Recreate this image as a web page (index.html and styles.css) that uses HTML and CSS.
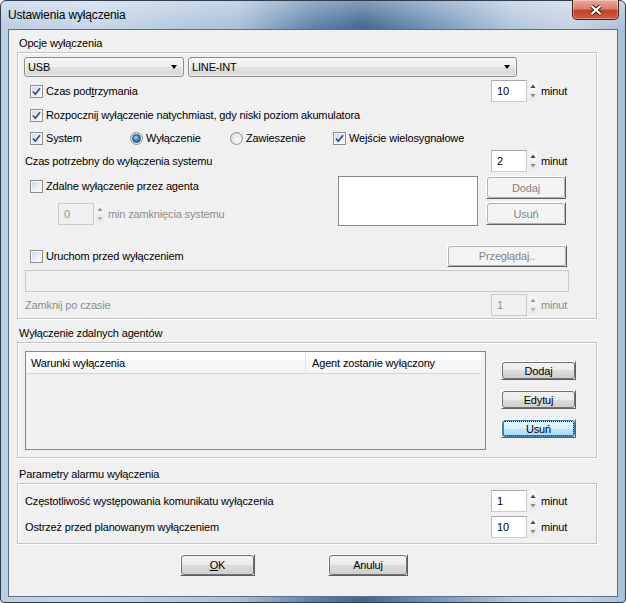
FILE: index.html
```html
<!DOCTYPE html>
<html lang="pl">
<head>
<meta charset="utf-8">
<title>Ustawienia wyłączenia</title>
<link rel="stylesheet" href="styles.css">
</head>
<body>
<div class="window">
  <div class="titlebar">
    <div class="title">Ustawienia wyłączenia</div>
    <div class="close">
      <svg width="16" height="12" viewBox="0 0 16 12"><path d="M3.5 2 L12.5 10 M12.5 2 L3.5 10" stroke="#3a1a14" stroke-width="4.2"/><path d="M3.5 2 L12.5 10 M12.5 2 L3.5 10" stroke="#fff" stroke-width="2.2"/></svg>
    </div>
  </div>
  <div class="client">
    <div class="glabel">Opcje wyłączenia</div>
    <div class="gbox box1">
      <div class="row r1">
        <div class="combo w-usb"><span>USB</span><i class="arrow"></i></div>
        <div class="combo w-line"><span>LINE-INT</span><i class="arrow"></i></div>
      </div>
      <div class="row r2 ind">
        <div class="chk"><span class="cb"><svg width="11" height="11" viewBox="0 0 11 11"><path d="M2 5.5 L4.3 8.2 L9 2.2" fill="none" stroke="#2b4a8c" stroke-width="1.7"/></svg></span><span>Czas pod<u>t</u>rzymania</span></div>
        <div class="spin-group">
          <div class="spin-input">10</div>
          <svg class="updown" width="10" height="22" viewBox="0 0 10 22"><rect x="1" y="1" width="8" height="9.5" fill="#f7f7f7"/><rect x="1" y="11.5" width="8" height="9.5" fill="#ececec"/><path d="M2.5 8 L5 4.5 L7.5 8Z" fill="#444"/><path d="M2.5 14 L5 17.5 L7.5 14Z" fill="#8a8a8a"/></svg>
          <span class="unit">minut</span>
        </div>
      </div>
      <div class="row r3 ind">
        <div class="chk"><span class="cb"><svg width="11" height="11" viewBox="0 0 11 11"><path d="M2 5.5 L4.3 8.2 L9 2.2" fill="none" stroke="#2b4a8c" stroke-width="1.7"/></svg></span><span>Rozpocznij wyłączenie natychmiast, gdy niski poziom akumulatora</span></div>
      </div>
      <div class="row r4 ind">
        <div class="chk c-sys"><span class="cb"><svg width="11" height="11" viewBox="0 0 11 11"><path d="M2 5.5 L4.3 8.2 L9 2.2" fill="none" stroke="#2b4a8c" stroke-width="1.7"/></svg></span><span>System</span></div>
        <div class="chk c-wyl"><span class="rb on"></span><span>Wyłączenie</span></div>
        <div class="chk c-zaw"><span class="rb"></span><span>Zawieszenie</span></div>
        <div class="chk"><span class="cb"><svg width="11" height="11" viewBox="0 0 11 11"><path d="M2 5.5 L4.3 8.2 L9 2.2" fill="none" stroke="#2b4a8c" stroke-width="1.7"/></svg></span><span>Wejście wielosygnałowe</span></div>
      </div>
      <div class="row r5">
        <span class="txt">Czas potrzebny do wyłączenia systemu</span>
        <div class="spin-group">
          <div class="spin-input">2</div>
          <svg class="updown" width="10" height="22" viewBox="0 0 10 22"><rect x="1" y="1" width="8" height="9.5" fill="#f7f7f7"/><rect x="1" y="11.5" width="8" height="9.5" fill="#ececec"/><path d="M2.5 8 L5 4.5 L7.5 8Z" fill="#444"/><path d="M2.5 14 L5 17.5 L7.5 14Z" fill="#8a8a8a"/></svg>
          <span class="unit">minut</span>
        </div>
      </div>
      <div class="r6">
        <div class="r6-left">
          <div class="row r6a ind">
            <div class="chk"><span class="cb"></span><span>Zdalne wyłączenie przez agenta</span></div>
          </div>
          <div class="row r6b">
            <div class="spin-input dis">0</div>
            <svg class="updown" width="10" height="22" viewBox="0 0 10 22"><rect x="1" y="1" width="8" height="9.5" fill="#f5f5f5"/><rect x="1" y="11.5" width="8" height="9.5" fill="#ececec"/><path d="M2.5 8 L5 4.5 L7.5 8Z" fill="#9a9a9a"/><path d="M2.5 14 L5 17.5 L7.5 14Z" fill="#b0b0b0"/></svg>
            <span class="unit gray">min zamknięcia systemu</span>
          </div>
        </div>
        <div class="lb"></div>
        <div class="r6-btns">
          <div class="btn dis h23"><span>Doda<u>j</u></span></div>
          <div class="btn dis h23"><span>Usuń</span></div>
        </div>
      </div>
      <div class="row r7 ind">
        <div class="chk"><span class="cb"></span><span>Uruchom przed wyłączeniem</span></div>
        <div class="btn dis b-przeg"><span>Przeglądaj..</span></div>
      </div>
      <div class="row r8">
        <div class="field"></div>
      </div>
      <div class="row r9">
        <span class="txt gray">Zamknij po czasie</span>
        <div class="spin-group">
          <div class="spin-input dis">1</div>
          <svg class="updown" width="10" height="22" viewBox="0 0 10 22"><rect x="1" y="1" width="8" height="9.5" fill="#f5f5f5"/><rect x="1" y="11.5" width="8" height="9.5" fill="#ececec"/><path d="M2.5 8 L5 4.5 L7.5 8Z" fill="#9a9a9a"/><path d="M2.5 14 L5 17.5 L7.5 14Z" fill="#b0b0b0"/></svg>
          <span class="unit gray">minut</span>
        </div>
      </div>
    </div>

    <div class="glabel g2">Wyłączenie zdalnych agentów</div>
    <div class="gbox box2">
      <div class="lv">
        <div class="lv-head">
          <div class="lv-col c1">Warunki wyłączenia</div>
          <div class="lv-col c2">Agent zostanie wyłączony</div>
        </div>
      </div>
      <div class="box2-btns">
        <div class="btn b-small"><span>Doda<u>j</u></span></div>
        <div class="btn b-small"><span>Edytuj</span></div>
        <div class="btn b-small focus"><span>Usuń</span></div>
      </div>
    </div>

    <div class="glabel g3">Parametry alarmu wyłączenia</div>
    <div class="gbox box3">
      <div class="row r-al">
        <span class="txt">Częstotliwość występowania komunikatu wyłączenia</span>
        <div class="spin-group">
          <div class="spin-input">1</div>
          <svg class="updown" width="10" height="22" viewBox="0 0 10 22"><rect x="1" y="1" width="8" height="9.5" fill="#f7f7f7"/><rect x="1" y="11.5" width="8" height="9.5" fill="#ececec"/><path d="M2.5 8 L5 4.5 L7.5 8Z" fill="#444"/><path d="M2.5 14 L5 17.5 L7.5 14Z" fill="#8a8a8a"/></svg>
          <span class="unit">minut</span>
        </div>
      </div>
      <div class="row r-al r-al2">
        <span class="txt">Ostrzeż przed planowanym wyłączeniem</span>
        <div class="spin-group">
          <div class="spin-input">10</div>
          <svg class="updown" width="10" height="22" viewBox="0 0 10 22"><rect x="1" y="1" width="8" height="9.5" fill="#f7f7f7"/><rect x="1" y="11.5" width="8" height="9.5" fill="#ececec"/><path d="M2.5 8 L5 4.5 L7.5 8Z" fill="#444"/><path d="M2.5 14 L5 17.5 L7.5 14Z" fill="#8a8a8a"/></svg>
          <span class="unit">minut</span>
        </div>
      </div>
    </div>

    <div class="footer">
      <div class="btn b-ok"><span><u>O</u>K</span></div>
      <div class="btn b-cancel"><span>Anuluj</span></div>
    </div>
  </div>
</div>
</body>
</html>
```

FILE: styles.css
```css
* { box-sizing: border-box; }
html, body { margin: 0; padding: 0; }
body {
  width: 626px; height: 603px; overflow: hidden; background: #fff;
  font-family: "Liberation Sans", Arial, sans-serif; font-size: 11px; color: #000;
  letter-spacing: -0.15px;
}
.window {
  width: 626px; height: 603px;
  border: 1px solid #2e3d50;
  border-radius: 6px 6px 4px 4px;
  display: flex; flex-direction: column;
  background:
    linear-gradient(to bottom, rgba(255,255,255,0.35), rgba(255,255,255,0) 28px),
    linear-gradient(to right, #bccee2 0%, #c6d6e8 15%, #a9bfd8 38%, #5d81aa 50%, #40678f 58%, #6d90b6 68%, #b2c6db 82%, #c4d4e6 92%, #a9bfd7 100%);
}
.titlebar {
  height: 28px; flex: none;
  display: flex; align-items: flex-start; justify-content: space-between;
  padding-left: 7px;
}
.title { font-size: 12px; line-height: 14px; margin-top: 7px; color: #000; }
.close {
  width: 47px; height: 20px; margin-top: -1px; margin-right: 6px;
  border: 1px solid #4a1c14; border-top: none;
  border-radius: 0 0 5px 5px;
  background: linear-gradient(#e9a99a 0%, #d9816f 45%, #c5432c 55%, #cf5a3b 100%);
  box-shadow: inset 0 0 0 1px rgba(255,255,255,0.35);
  display: flex; align-items: center; justify-content: center;
}
.client {
  flex: 1; margin: 0 7px 5px 7px;
  border: 1px solid #5e6f84;
  background: #f0f0f0;
}
.glabel { height: 17px; line-height: 17px; padding-left: 10px; margin-top: 5px; }
.g2 { margin-top: 6px; }
.g3 { margin-top: 8px; }
.gbox {
  margin-left: 8px; width: 580px;
  border: 1px solid #c3c3c3;
  box-shadow: inset 1px 1px 0 #fff, 1px 1px 0 #fff;
}
.box1 { height: 267px; padding: 4px 6px 1px 6px; }
.box2 { height: 116px; padding: 8px 0 0 7px; display: flex; align-items: flex-start; }
.box3 { height: 61px; padding: 6px 6px 0 6px; }

.row { display: flex; align-items: center; }
.ind { padding-left: 6px; }
.r1 { height: 20px; gap: 4px; }
.r2 { margin-top: 3px; height: 22px; }
.r3 { margin-top: 3px; height: 20px; }
.r4 { margin-top: 3px; height: 20px; }
.r5 { margin-top: 2px; height: 22px; padding-left: 1px; }
.r6 { margin-top: 4px; height: 50px; display: grid; grid-template-columns: 306px 140px 80px; column-gap: 8px; }
.r6-left { display: flex; flex-direction: column; }
.r6a { height: 20px; }
.r6b { margin-top: 7px; height: 22px; padding-left: 34px; }
.r6-btns { display: flex; flex-direction: column; gap: 3px; }
.r7 { margin-top: 19px; height: 22px; }
.r8 { margin-top: 3px; height: 22px; padding-left: 1px; }
.r9 { margin-top: 2px; height: 22px; padding-left: 1px; }
.r-al { height: 22px; padding-left: 1px; }
.r-al2 { margin-top: 4px; }

.txt { white-space: nowrap; }
.gray { color: #8d8d8d; }

.combo {
  height: 20px;
  border: 1px solid #8b8b8b; border-radius: 3px;
  background: linear-gradient(#f6f6f6 0%, #eeeeee 50%, #e2e2e2 50%, #d8d8d8 100%);
  box-shadow: inset 0 0 0 1px rgba(255,255,255,0.6);
  display: flex; align-items: center; justify-content: space-between;
  padding: 0 6px 0 3px;
}
.w-usb { width: 160px; }
.w-line { width: 329px; }
.arrow {
  width: 0; height: 0;
  border-left: 3.5px solid transparent; border-right: 3.5px solid transparent;
  border-top: 4px solid #000;
}

.chk { display: flex; align-items: center; gap: 3px; white-space: nowrap; }
.c-sys { width: 100px; }
.c-wyl { width: 100px; }
.c-zaw { width: 103px; }
.cb {
  width: 13px; height: 13px; flex: none;
  border: 1px solid #8e8f8f;
  background: linear-gradient(135deg, #cfd3d9 0%, #eef0f2 60%, #fafafa 100%);
  box-shadow: inset 0 0 0 1px #f6f6f6;
  display: flex; align-items: center; justify-content: center;
}
.rb {
  width: 13px; height: 13px; flex: none; border-radius: 50%;
  border: 1px solid #8e8f8f;
  background: radial-gradient(circle at 60% 65%, #f8f8f8 0%, #e4e4e4 60%, #d0d0d0 100%);
  display: flex; align-items: center; justify-content: center;
}
.rb.on::after {
  content: ""; width: 7px; height: 7px; border-radius: 50%;
  background: radial-gradient(circle at 40% 35%, #9fd3fa 0%, #3c8ad0 45%, #1c4f8c 100%);
  border: 1px solid #1f3f6a;
}

.spin-group { margin-left: auto; width: 99px; height: 22px; display: flex; align-items: center; }
.spin-input {
  width: 36px; height: 22px; flex: none;
  border: 1px solid #abadb3; border-color: #a5a8ae #c4c7cc #c9ccd1 #b8bbc0;
  background: #fff;
  padding: 3px 0 0 5px; line-height: 14px;
}
.spin-input.dis { background: #f0f0f0; border-color: #c9c9c9; color: #8d8d8d; }
.updown { flex: none; margin-left: 1px; }
.unit { margin-left: 3px; white-space: nowrap; }

.lb { width: 140px; height: 50px; border: 1px solid #82868d; background: #fff; }

.btn {
  border: 1px solid; border-color: #ffffff #5e5e5e #5e5e5e #ffffff;
  background: #f0f0f0;
}
.btn > span {
  display: flex; height: 100%; align-items: center; justify-content: center;
  border: 1px solid #707070; border-radius: 3px;
  background: linear-gradient(#f2f2f2 0%, #ebebeb 50%, #dddddd 50%, #cfcfcf 100%);
  white-space: nowrap;
}
.btn.dis > span { border-color: #adb2b5; background: #f4f4f4; color: #838383; }
.btn.focus > span {
  border-color: #3c7fb1;
  background: linear-gradient(#eaf6fd 0%, #d9f0fc 50%, #bee6fd 50%, #a7d9f5 100%);
  outline: 1px dotted #000; outline-offset: -2px;
}
.h23 { height: 23px; width: 80px; }
.b-przeg { width: 120px; height: 22px; margin-left: auto; margin-right: 23px; }
.field { width: 544px; height: 22px; border: 1px solid #c8c8c8; background: #f0f0f0; }

.lv { width: 461px; height: 99px; border: 1px solid #828790; background: #f0f0f0; flex: none; }
.lv-head {
  display: flex; height: 22px; width: 455px;
  background: linear-gradient(#ffffff 0%, #ffffff 40%, #f7f8fa 40%, #f3f4f6 100%);
  border-bottom: 1px solid #d5d5d5;
}
.lv-col { display: flex; align-items: center; white-space: nowrap; }
.lv-col.c1 { width: 280px; padding-left: 5px; border-right: 1px solid #e3e5e8; }
.lv-col.c2 { padding-left: 6px; }
.box2-btns { margin-left: 15px; margin-top: 10px; display: flex; flex-direction: column; gap: 10px; }
.b-small { width: 75px; height: 19px; }

.footer { margin-top: 10px; padding-left: 171px; display: flex; gap: 73px; }
.b-ok { width: 75px; height: 22px; }
.b-cancel { width: 80px; height: 22px; }
```
